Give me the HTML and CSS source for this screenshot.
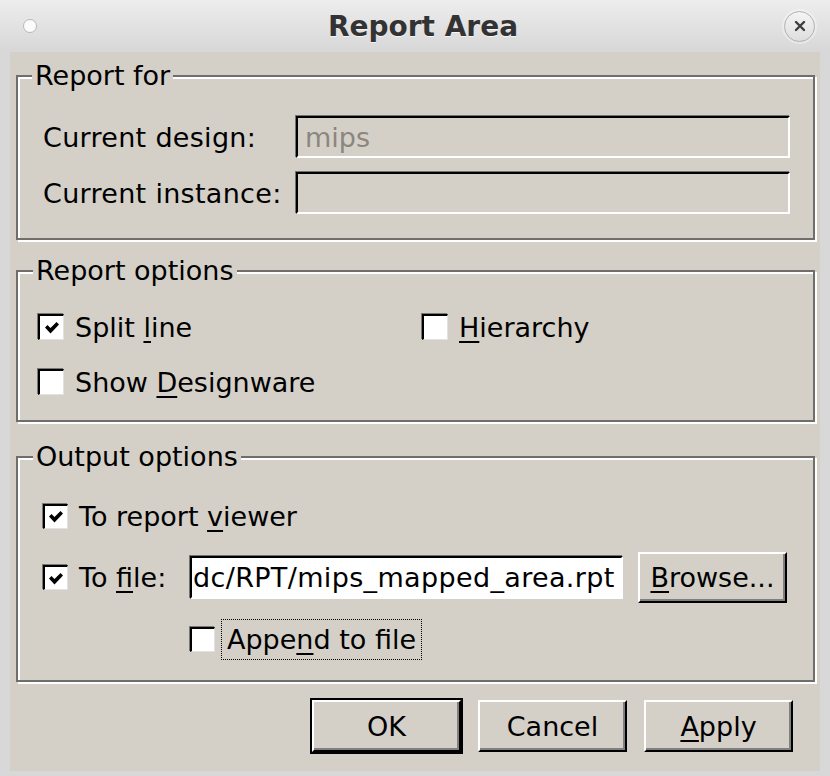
FILE: index.html
```html
<!DOCTYPE html>
<html>
<head>
<meta charset="utf-8">
<title>Report Area</title>
<link rel="stylesheet" href="styles.css">
</head>
<body>
<div class="titlebar">
  <div class="tb-left"><span class="dot"></span></div>
  <div class="title">Report Area</div>
  <div class="tb-right">
    <span class="close">
      <svg width="12" height="12" viewBox="0 0 12 12"><path d="M2 2 L10 10 M10 2 L2 10" stroke="#3c3c3c" stroke-width="2.4" stroke-linecap="round"/></svg>
    </span>
  </div>
</div>
<div class="panel">
  <fieldset class="group g-for">
    <legend>Report for</legend>
    <div class="form-grid">
      <span class="lbl">Current design:</span>
      <div class="entry">mips</div>
      <span class="lbl">Current instance:</span>
      <div class="entry"></div>
    </div>
  </fieldset>

  <fieldset class="group g-opts">
    <legend>Report options</legend>
    <div class="opts-grid">
      <div class="check">
        <span class="cb"><svg class="tick" viewBox="0 0 14 12"><polygon points="0,5.5 2.5,3 5.5,6 11.5,0 14,2.5 5.5,11.5"/></svg></span>
        <span>Split <u>l</u>ine</span>
      </div>
      <div class="check">
        <span class="cb"></span>
        <span><u>H</u>ierarchy</span>
      </div>
      <div class="check">
        <span class="cb"></span>
        <span>Show <u>D</u>esignware</span>
      </div>
    </div>
  </fieldset>

  <fieldset class="group g-out">
    <legend>Output options</legend>
    <div class="out-grid">
      <div class="check full">
        <span class="cb"><svg class="tick" viewBox="0 0 14 12"><polygon points="0,5.5 2.5,3 5.5,6 11.5,0 14,2.5 5.5,11.5"/></svg></span>
        <span>To report <u>v</u>iewer</span>
      </div>
      <div class="check">
        <span class="cb"><svg class="tick" viewBox="0 0 14 12"><polygon points="0,5.5 2.5,3 5.5,6 11.5,0 14,2.5 5.5,11.5"/></svg></span>
        <span>To <u>f</u>ile:</span>
      </div>
      <div class="entry file">dc/RPT/mips_mapped_area.rpt</div>
      <button class="btn browse"><u>B</u>rowse...</button>
      <div class="check append">
        <span class="cb"></span>
        <span class="focus">Appe<u>n</u>d to file</span>
      </div>
    </div>
  </fieldset>

  <div class="buttons">
    <button class="btn default">OK</button>
    <button class="btn">Cancel</button>
    <button class="btn"><u>A</u>pply</button>
  </div>
</div>
</body>
</html>
```

FILE: styles.css
```css
html, body {
  margin: 0;
  padding: 0;
}

body {
  width: 830px;
  height: 776px;
  overflow: hidden;
  background: #d8d8d8;
  font-family: "DejaVu Sans", sans-serif;
  font-size: 27px;
  color: #000;
}

/* ---------- title bar ---------- */
.titlebar {
  height: 52px;
  display: grid;
  grid-template-columns: 1fr auto 1fr;
  align-items: center;
  background: linear-gradient(#ededed, #d7d7d7);
}

.tb-left {
  display: flex;
  padding-left: 23px;
}

.dot {
  width: 12px;
  height: 12px;
  border-radius: 50%;
  background: #fbfbfb;
  border: 1px solid #b9b9b9;
}

.title {
  padding-left: 16px;
  font-weight: bold;
  font-size: 28px;
  color: #333;
  text-shadow: 0 1px 0 rgba(255, 255, 255, 0.7);
}

.tb-right {
  display: flex;
  justify-content: flex-end;
  padding-right: 15px;
}

.close {
  width: 29px;
  height: 29px;
  border-radius: 50%;
  border: 1px solid #b4b4b4;
  background: linear-gradient(#f4f4f4, #dedede);
  display: flex;
  align-items: center;
  justify-content: center;
  box-shadow: 0 0 0 2px rgba(255, 255, 255, 0.35);
}

/* ---------- panel ---------- */
.panel {
  box-sizing: border-box;
  height: 719px;
  margin: 0 10px 0 10px;
  padding: 8px 5px 0 6px;
  background: #d4d0c8;
}

.group {
  margin: 0;
  border: 2px solid #6f6e6a;
  box-shadow: inset 2px 2px 0 #fff, 2px 2px 0 #fff;
  min-inline-size: 0;
}

.group legend {
  padding: 0 3px;
  line-height: 32px;
  background: #d4d0c8;
}

.g-for {
  padding: 24px 23px 24px 23px;
}

.g-for legend {
  margin-left: -9px;
}

.g-opts {
  margin-top: 15px;
  padding: 20px 20px 18px 20px;
}

.g-opts legend {
  margin-left: -5px;
}

.g-out {
  margin-top: 19px;
  padding: 23px 26px 20px 25px;
}

.g-out legend {
  margin-left: -10px;
}

/* ---------- report for ---------- */
.form-grid {
  display: grid;
  grid-template-columns: 255px 1fr;
  row-gap: 14px;
  align-items: center;
}

.lbl {
  padding-left: 2px;
  white-space: nowrap;
  letter-spacing: 0.3px;
}

.entry {
  box-sizing: border-box;
  height: 42px;
  border-style: solid;
  border-width: 2px;
  border-color: #000 #fff #fff #000;
  box-shadow: -1px -1px 0 #74726e;
  padding-left: 7px;
  display: flex;
  align-items: center;
  color: #8b8680;
  white-space: nowrap;
  overflow: hidden;
}

/* ---------- checks ---------- */
.check {
  display: flex;
  align-items: center;
  gap: 11px;
  height: 40px;
  white-space: nowrap;
}

.cb {
  box-sizing: border-box;
  flex: none;
  width: 26px;
  height: 26px;
  background: #fff;
  border-style: solid;
  border-width: 2px 1px 1px 2px;
  border-color: #000 #e2e2e2 #e2e2e2 #000;
  box-shadow: -1px -1px 0 #7a7874;
  display: flex;
  align-items: center;
  justify-content: center;
}

.tick {
  width: 14px;
  height: 12px;
  fill: #000;
  margin-top: 1px;
}

u {
  text-decoration-thickness: 2px;
  text-underline-offset: 4px;
}

.opts-grid {
  display: grid;
  grid-template-columns: 384px 1fr;
  row-gap: 15px;
}

/* ---------- output options ---------- */
.out-grid {
  display: grid;
  grid-template-columns: 132px 1fr 149px;
  column-gap: 15px;
  row-gap: 16px;
  align-items: center;
}

.out-grid .full {
  grid-column: 1 / -1;
}

.g-out .cb {
  width: 25px;
  height: 25px;
}

.entry.file {
  height: 43px;
  background: #fff;
  color: #000;
  padding-left: 1px;
  letter-spacing: 0.35px;
}

.append {
  grid-column: 2 / 4;
  height: 41px;
  gap: 6px;
}

.focus {
  box-sizing: border-box;
  height: 41px;
  display: flex;
  align-items: center;
  padding: 0 5px;
  border: 1px dotted #000;
}

/* ---------- buttons ---------- */
.btn {
  box-sizing: border-box;
  width: 149px;
  height: 52px;
  padding: 0;
  margin: 0;
  font: inherit;
  color: #000;
  background: #d4d0c8;
  border-style: solid;
  border-width: 2px;
  border-color: #fff #000 #000 #fff;
  box-shadow: inset -2px -2px 0 #808080;
}

.browse {
  height: 51px;
}

.btn.default {
  outline: 2px solid #000;
}

.buttons {
  display: flex;
  justify-content: flex-end;
  gap: 17px;
  margin-top: 18px;
  padding-right: 22px;
}
```
